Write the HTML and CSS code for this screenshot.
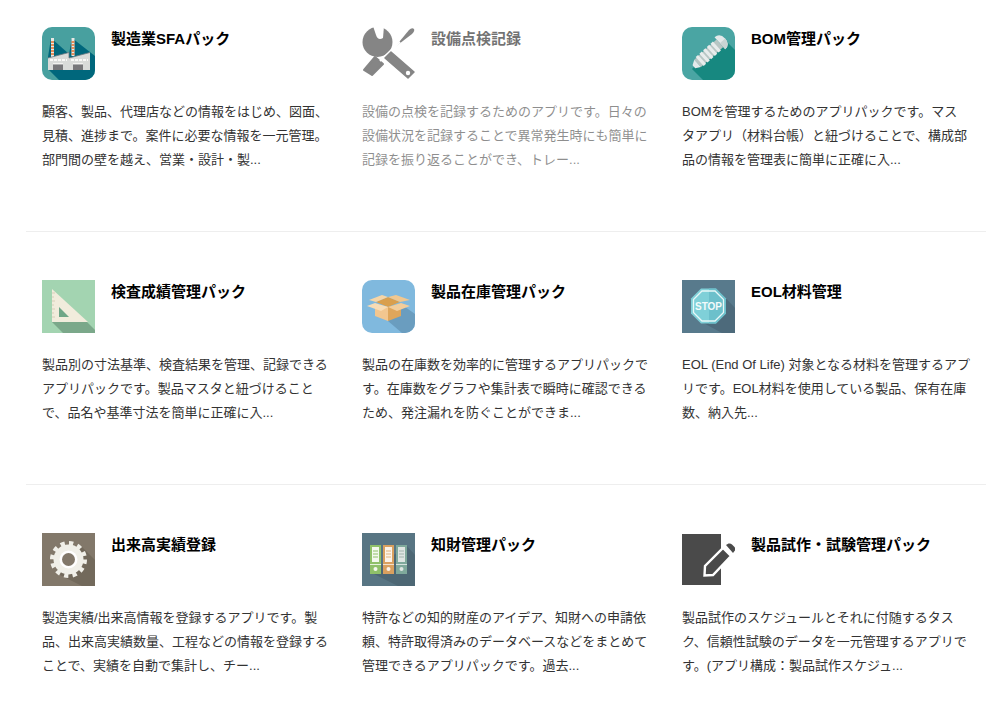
FILE: index.html
```html
<!DOCTYPE html>
<html lang="ja">
<head>
    <meta charset="UTF-8">
    <meta name="viewport" content="width=device-width, initial-scale=1.0">
    <title>アプリパック一覧</title>

    <link rel="stylesheet" href="styles.css">
</head>
<body>
    <div class="pack-list">
        <div class="pack-row">
            <div class="pack">
                <div class="pack-head">
                    <svg class="icon icon-round" viewBox="0 0 53 53">
                        <rect width="53" height="53" fill="#48a09f"/>
                        <polygon points="9,11 27,27 30,11 53,29 53,53 17,53 6,42 6,30" fill="#00677c"/>
                        <rect x="9" y="11" width="3" height="20" fill="#e8e8e4"/>
                        <path d="M9 15h3M9 18h3M9 21h3M9 24h3M9 27h3" stroke="#e2702e" stroke-width="1.5"/>
                        <rect x="29.5" y="11" width="3" height="18" fill="#e8e8e4"/>
                        <path d="M29.5 15h3M29.5 18h3M29.5 21h3M29.5 24h3M29.5 27h3" stroke="#e2702e" stroke-width="1.5"/>
                        <polygon points="6,31 27,25.5 27,31 48,25.5 48,43 6,43" fill="#d9dbd9"/>
                        <path d="M6 31 L27 25.5 L27 31 L48 25.5" fill="none" stroke="#6d7a80" stroke-width="0.8"/>
                        <path d="M8 33h17M29 33h17" stroke="#f9f9f7" stroke-width="2" stroke-dasharray="3 1"/>
                        <rect x="11" y="36" width="10" height="1.5" fill="#f2f2f0"/>
                        <rect x="31" y="36" width="10" height="1.5" fill="#f2f2f0"/>
                        <rect x="11" y="37.5" width="10" height="5.5" fill="#77777a"/>
                        <rect x="31" y="37.5" width="10" height="5.5" fill="#77777a"/>
                    </svg>
                    <h2 class="pack-title">製造業SFAパック</h2>
                </div>
                <p class="pack-desc">顧客、製品、代理店などの情報をはじめ、図面、見積、進捗まで。案件に必要な情報を一元管理。部門間の壁を越え、営業・設計・製...</p>
            </div>
            <div class="pack pack-muted">
                <div class="pack-head">
                    <svg class="icon" viewBox="0 0 53 53">
                        <!-- screwdriver -->
                        <polygon points="2,43 13,30 21,37 10,48" fill="#222" stroke="#222" stroke-width="2" stroke-linejoin="round"/>
                        <path d="M33 20 L47 3 Q50 0 52 2 Q53 4 50 7 Z" fill="#222"/>
                        <!-- wrench -->
                        <circle cx="15.5" cy="15" r="15" fill="#222"/>
                        <path d="M11 -1 L14 8 Q16 14 21 11 L22 -1 Z" fill="#fff"/>
                        <path d="M38 15 L18 34" stroke="#fff" stroke-width="2"/>
                        <polygon points="23,31 29,25 52,45 46,51" fill="#222" stroke="#222" stroke-width="1.5" stroke-linejoin="round"/>
                        <circle cx="46" cy="46" r="2.2" fill="#fff"/>
                    </svg>
                    <h2 class="pack-title">設備点検記録</h2>
                </div>
                <p class="pack-desc">設備の点検を記録するためのアプリです。日々の設備状況を記録することで異常発生時にも簡単に記録を振り返ることができ、トレー...</p>
            </div>
            <div class="pack">
                <div class="pack-head">
                    <svg class="icon icon-round" viewBox="0 0 53 53">
                        <rect width="53" height="53" fill="#4aa5a3"/>
                        <polygon points="41,11 53,23 53,53 21,53 10,42" fill="#178880"/>
                        <g transform="rotate(48 26 27)">
                            <path d="M18 11 Q18 4 26 4 Q34 4 34 11 Z" fill="#e3e9ea"/>
                            <path d="M26 4 Q34 4 34 11 L26 11 Z" fill="#c9d4d4"/>
                            <rect x="21" y="11" width="10" height="30" fill="#b8c6c4"/>
                            <rect x="20" y="15" width="12" height="3.2" fill="#e8ecec"/>
                            <rect x="20" y="20" width="12" height="3.2" fill="#e8ecec"/>
                            <rect x="20" y="25" width="12" height="3.2" fill="#e8ecec"/>
                            <rect x="20" y="30" width="12" height="3.2" fill="#e8ecec"/>
                            <rect x="20" y="35" width="12" height="3.2" fill="#e8ecec"/>
                            <polygon points="21,41 31,41 28,46 24,46" fill="#e3e9ea"/>
                        </g>
                    </svg>
                    <h2 class="pack-title">BOM管理パック</h2>
                </div>
                <p class="pack-desc">BOMを管理するためのアプリパックです。マス<br>タアプリ（材料台帳）と紐づけることで、構成部品の情報を管理表に簡単に正確に入...</p>
            </div>
        </div>

        <div class="pack-row">
            <div class="pack">
                <div class="pack-head">
                    <svg class="icon" viewBox="0 0 53 53">
                        <rect width="53" height="53" fill="#a3d4b1"/>
                        <polygon points="10,42 45,42 53,50 53,53 21,53" fill="#7ba88a"/>
                        <polygon points="10,9 10,42 46,42" fill="#f1ecdc"/>
                        <polygon points="17,27 17,37 27,37" fill="#6fa687"/>
                        <path d="M10 13h3M10 17h2M10 21h3M10 25h2M10 29h3M10 33h2M10 37h3" stroke="#d6cfb8" stroke-width="1"/>
                    </svg>
                    <h2 class="pack-title">検査成績管理パック</h2>
                </div>
                <p class="pack-desc">製品別の寸法基準、検査結果を管理、記録できるアプリパックです。製品マスタと紐づけることで、品名や基準寸法を簡単に正確に入...</p>
            </div>
            <div class="pack">
                <div class="pack-head">
                    <svg class="icon icon-round" viewBox="0 0 53 53">
                        <rect width="53" height="53" fill="#80b9de"/>
                        <polygon points="39,24 53,34 53,53 40,53 26,41" fill="#6a9dbf"/>
                        <polygon points="14,22 26,17 38,22 26,27" fill="#d99f4e"/>
                        <polygon points="13,24 26,27 26,41 13,36" fill="#f2c68f"/>
                        <polygon points="26,27 39,24 39,36 26,41" fill="#dfa65b"/>
                        <polygon points="14,22 26,17 20,15 7,20" fill="#f6d5a6"/>
                        <polygon points="26,17 38,22 48,20 34,15" fill="#f0c78f"/>
                        <polygon points="13,23 26,27 19,31 5,26" fill="#f8dcb5"/>
                        <polygon points="39,23 26,27 35,31 48,26" fill="#f2cd9b"/>
                    </svg>
                    <h2 class="pack-title">製品在庫管理パック</h2>
                </div>
                <p class="pack-desc">製品の在庫数を効率的に管理するアプリパックです。在庫数をグラフや集計表で瞬時に確認できるため、発注漏れを防ぐことができま...</p>
            </div>
            <div class="pack">
                <div class="pack-head">
                    <svg class="icon" viewBox="0 0 53 53">
                        <rect width="53" height="53" fill="#587a8c"/>
                        <polygon points="38,12 53,28 53,53 40,53 16,40" fill="#4d6a7b"/>
                        <polygon points="19,8.5 34,8.5 44,18.5 44,33.5 34,43.5 19,43.5 9,33.5 9,18.5" fill="#7fd0d8"/>
                        <polygon points="27,8.5 34,8.5 44,18.5 44,33.5 34,43.5 27,43.5" fill="#6cc0cb"/>
                        <polygon points="20,11 33,11 41.5,19.5 41.5,32.5 33,41 20,41 11.5,32.5 11.5,19.5" fill="none" stroke="#e8f7f8" stroke-width="1.3"/>
                        <text class="stop-text" x="26.5" y="30" text-anchor="middle">STOP</text>
                    </svg>
                    <h2 class="pack-title">EOL材料管理</h2>
                </div>
                <p class="pack-desc">EOL (End Of Life) 対象となる材料を管理するアプリです。EOL材料を使用している製品、保有在庫数、納入先...</p>
            </div>
        </div>

        <div class="pack-row">
            <div class="pack">
                <div class="pack-head">
                    <svg class="icon" viewBox="0 0 53 53">
                        <rect width="53" height="53" fill="#82786a"/>
                        <polygon points="38,12 53,27 53,53 40,53 14,40" fill="#72695b"/>
                        <circle cx="26.5" cy="26.5" r="15" fill="#f0efe8"/>
                        <circle cx="26.5" cy="26.5" r="16" fill="none" stroke="#f0efe8" stroke-width="5" stroke-dasharray="4.19 4.19"/>
                        <circle cx="26.5" cy="26.5" r="9" fill="#fff"/>
                        <circle cx="26.5" cy="26.5" r="6.5" fill="#82786a"/>
                    </svg>
                    <h2 class="pack-title">出来高実績登録</h2>
                </div>
                <p class="pack-desc">製造実績/出来高情報を登録するアプリです。製品、出来高実績数量、工程などの情報を登録することで、実績を自動で集計し、チー...</p>
            </div>
            <div class="pack">
                <div class="pack-head">
                    <svg class="icon" viewBox="0 0 53 53">
                        <rect width="53" height="53" fill="#587583"/>
                        <polygon points="44,12 53,22 53,53 36,53 10,40" fill="#4d6774"/>
                        <rect x="8" y="12" width="11" height="29" fill="#8fc069"/>
                        <rect x="10" y="14" width="7" height="15" fill="#f4f8ee"/>
                        <path d="M11 18h5M11 21h5M11 24h5" stroke="#8fc069" stroke-width="1"/>
                        <rect x="8" y="31" width="11" height="1" fill="#e6f2da"/>
                        <circle cx="13.5" cy="36" r="2" fill="#f4f8ee"/>
                        <rect x="21" y="12" width="11" height="29" fill="#d9a05f"/>
                        <rect x="23" y="14" width="7" height="15" fill="#fbf3e8"/>
                        <path d="M24 18h5M24 21h5M24 24h5" stroke="#e2b57f" stroke-width="1"/>
                        <rect x="21" y="31" width="11" height="1" fill="#f3e0c8"/>
                        <circle cx="26.5" cy="36" r="2" fill="#fbf3e8"/>
                        <rect x="34" y="12" width="11" height="29" fill="#7fa99b"/>
                        <rect x="36" y="14" width="7" height="15" fill="#dfe6e2"/>
                        <path d="M37 18h5M37 21h5M37 24h5" stroke="#a3b5ae" stroke-width="1"/>
                        <rect x="34" y="31" width="11" height="1" fill="#d5e2dd"/>
                        <circle cx="39.5" cy="36" r="2" fill="#dfe6e2"/>
                    </svg>
                    <h2 class="pack-title">知財管理パック</h2>
                </div>
                <p class="pack-desc">特許などの知的財産のアイデア、知財への申請依頼、特許取得済みのデータベースなどをまとめて管理できるアプリパックです。過去...</p>
            </div>
            <div class="pack">
                <div class="pack-head">
                    <svg class="icon" viewBox="0 0 53 53">
                        <rect x="0" y="1" width="39" height="51" fill="#4a4a4a"/>
                        <path d="M22.5 42.5 L23 33 L41 15 L49 23 L31 42 Z" fill="#4a4a4a" stroke="#fff" stroke-width="2.4"/>
                        <path d="M44 12 L46.5 10.5 Q48.5 10 50 11.5 L52.5 14 Q54 16 52.5 18 L51 20 Z" fill="#4a4a4a"/>
                    </svg>
                    <h2 class="pack-title">製品試作・試験管理パック</h2>
                </div>
                <p class="pack-desc">製品試作のスケジュールとそれに付随するタスク、信頼性試験のデータを一元管理するアプリです。(アプリ構成：製品試作スケジュ...</p>
            </div>
        </div>
    </div>
</body>
</html>
```

FILE: styles.css
```css
* {
    margin: 0;
    padding: 0;
    box-sizing: border-box;
}

body {
    font-family: "Liberation Sans", "Noto Sans CJK JP", sans-serif;
    background: #fff;
}

.pack-list {
    width: 960px;
    margin-left: 26px;
}

.pack-row {
    display: grid;
    grid-template-columns: repeat(3, 320px);
    height: 253px;
    padding: 48px 0 0 16px;
    border-bottom: 1px solid #eee;
}

.pack-row:first-child {
    height: 232px;
    padding-top: 27px;
}

.pack-row:last-child {
    border-bottom: none;
}

.pack-head {
    display: flex;
    gap: 16px;
    height: 53px;
}

.icon {
    display: block;
    width: 53px;
    height: 53px;
    flex-shrink: 0;
}

.icon-round {
    border-radius: 10px;
}

.stop-text {
    font-family: "Liberation Sans", sans-serif;
    font-size: 10px;
    font-weight: bold;
    fill: #f2fbfb;
}

.pack-title {
    margin-top: 1px;
    font-size: 15px;
    font-weight: bold;
    line-height: 22px;
    color: #000;
}

.pack-desc {
    width: 292px;
    margin-top: 20px;
    font-size: 13px;
    line-height: 24px;
    color: #333;
}

.pack-muted {
    opacity: 0.55;
}
```
